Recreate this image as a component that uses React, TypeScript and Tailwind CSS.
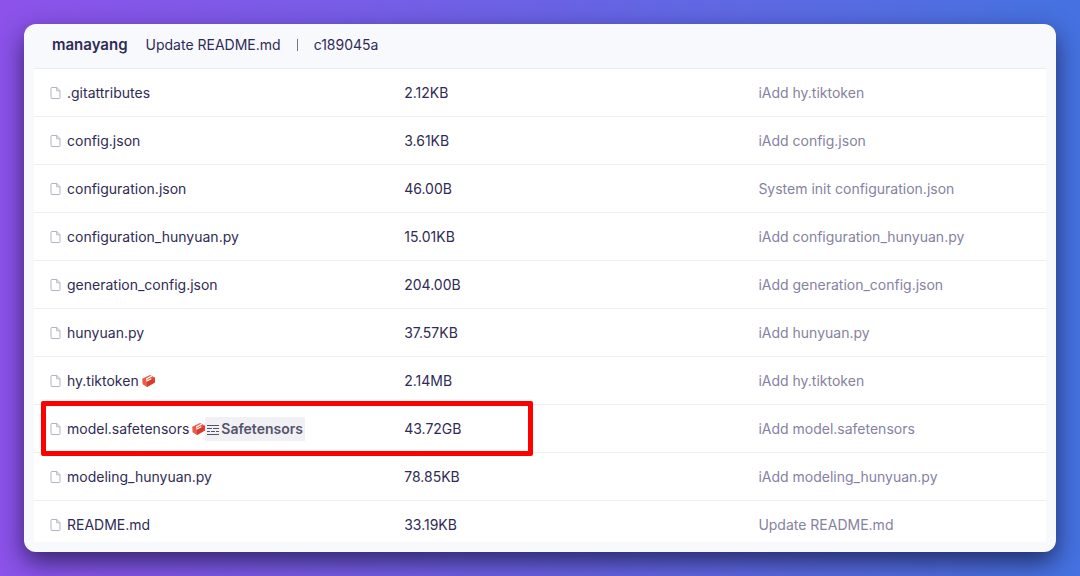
interface FileEntry {
  name: string;
  size: string;
  commit: string;
  lfs?: boolean;
  safetensors?: boolean;
  highlighted?: boolean;
}

const FILES: FileEntry[] = [
  { name: ".gitattributes", size: "2.12KB", commit: "iAdd hy.tiktoken" },
  { name: "config.json", size: "3.61KB", commit: "iAdd config.json" },
  {
    name: "configuration.json",
    size: "46.00B",
    commit: "System init configuration.json",
  },
  {
    name: "configuration_hunyuan.py",
    size: "15.01KB",
    commit: "iAdd configuration_hunyuan.py",
  },
  {
    name: "generation_config.json",
    size: "204.00B",
    commit: "iAdd generation_config.json",
  },
  { name: "hunyuan.py", size: "37.57KB", commit: "iAdd hunyuan.py" },
  { name: "hy.tiktoken", size: "2.14MB", commit: "iAdd hy.tiktoken", lfs: true },
  {
    name: "model.safetensors",
    size: "43.72GB",
    commit: "iAdd model.safetensors",
    lfs: true,
    safetensors: true,
    highlighted: true,
  },
  {
    name: "modeling_hunyuan.py",
    size: "78.85KB",
    commit: "iAdd modeling_hunyuan.py",
  },
  { name: "README.md", size: "33.19KB", commit: "Update README.md" },
];

export default function App() {
  return (
    <main className="min-h-screen bg-linear-to-r from-[#8c52ea] via-[#6a62e4] to-[#4472e0] p-6 font-['Inter','Liberation_Sans',sans-serif] text-sm text-[#2f2b55]">
      <section className="rounded-xl bg-[#f8f9fd] px-2.5 pb-2.5 shadow-[0_10px_24px_rgba(10,10,40,0.65)]">
        <CommitHeader />
        <table className="w-full table-fixed border-separate border-spacing-0 bg-white text-left">
          <colgroup>
            <col className="w-[35%]" />
            <col className="w-[35%]" />
            <col className="w-[30%]" />
          </colgroup>
          <tbody>
            {FILES.map((file) => (
              <FileRow key={file.name} file={file} />
            ))}
          </tbody>
        </table>
      </section>
    </main>
  );
}

const CommitHeader = () => {
  return (
    <header className="flex h-[45px] items-center border-b border-[#e9ecf5] px-4.5 pb-0.5">
      <span className="text-[15px] font-semibold">manayang</span>
      <span className="ml-4.5">Update README.md</span>
      <span className="mx-4 h-3 w-px bg-[#77738f]" />
      <span>c189045a</span>
    </header>
  );
};

const FileRow = ({ file }: { file: FileEntry }) => {
  return (
    <tr className="*:border-b *:border-[#eeeef3] *:px-4 *:pt-3.5 *:pb-[13px] *:leading-5 last:*:border-b-0 last:*:pb-[7px]">
      <td className="relative">
        <div className="flex h-5 items-center whitespace-nowrap">
          <FileIcon />
          <a href="#" className="ml-1.5">
            {file.name}
          </a>
          {file.lfs && <LfsIcon />}
          {file.safetensors && <SafetensorsBadge />}
        </div>
        {file.highlighted && (
          <span className="pointer-events-none absolute -top-1 -bottom-1 left-[7px] w-[139%] rounded-xs border-5 border-[#ff0000]" />
        )}
      </td>
      <td>{file.size}</td>
      <td className="text-[#85829f]">{file.commit}</td>
    </tr>
  );
};

const FileIcon = () => {
  return (
    <svg
      viewBox="0 0 11 12"
      className="h-3 w-[11px] shrink-0"
      fill="none"
      stroke="#b3b1c0"
      aria-hidden="true"
    >
      <path d="M2 .5h4.8L10 3.7v6.8a1 1 0 0 1-1 1H2a1 1 0 0 1-1-1v-9a1 1 0 0 1 1-1Z" />
      <path d="M6.7.7v3.1h3.1" />
    </svg>
  );
};

const LfsIcon = () => {
  return (
    <svg
      viewBox="0 0 13 12"
      className="ml-[3px] h-3 w-[13px] shrink-0"
      aria-hidden="true"
    >
      <path fill="#ec5a4a" d="M.2 3.8 8 .1l4.8 2.3v5.2L5 11.9.6 9.3Z" />
      <path fill="#dc3a2a" d="M5 6.6l7.8-4.2v5.2L5 11.9Z" />
      <path
        fill="none"
        stroke="#fff"
        strokeWidth="1.1"
        d="M9.8 1.1 4.6 3.9 5 6l4.2-2.2"
      />
    </svg>
  );
};

const SafetensorsBadge = () => {
  return (
    <span className="flex h-6 items-center gap-0.5 bg-[#f0f0f5] px-0.5 font-semibold text-[#55536a]">
      <svg
        viewBox="0 0 12 11"
        className="h-[11px] w-3"
        fill="none"
        stroke="#55536a"
        aria-hidden="true"
      >
        <path d="M0 1.5h12M0 10.5h12" />
        <path d="M0 4.5h5m1 0h6M0 7.5h3m1 0h4m1 0h3" />
      </svg>
      Safetensors
    </span>
  );
};
